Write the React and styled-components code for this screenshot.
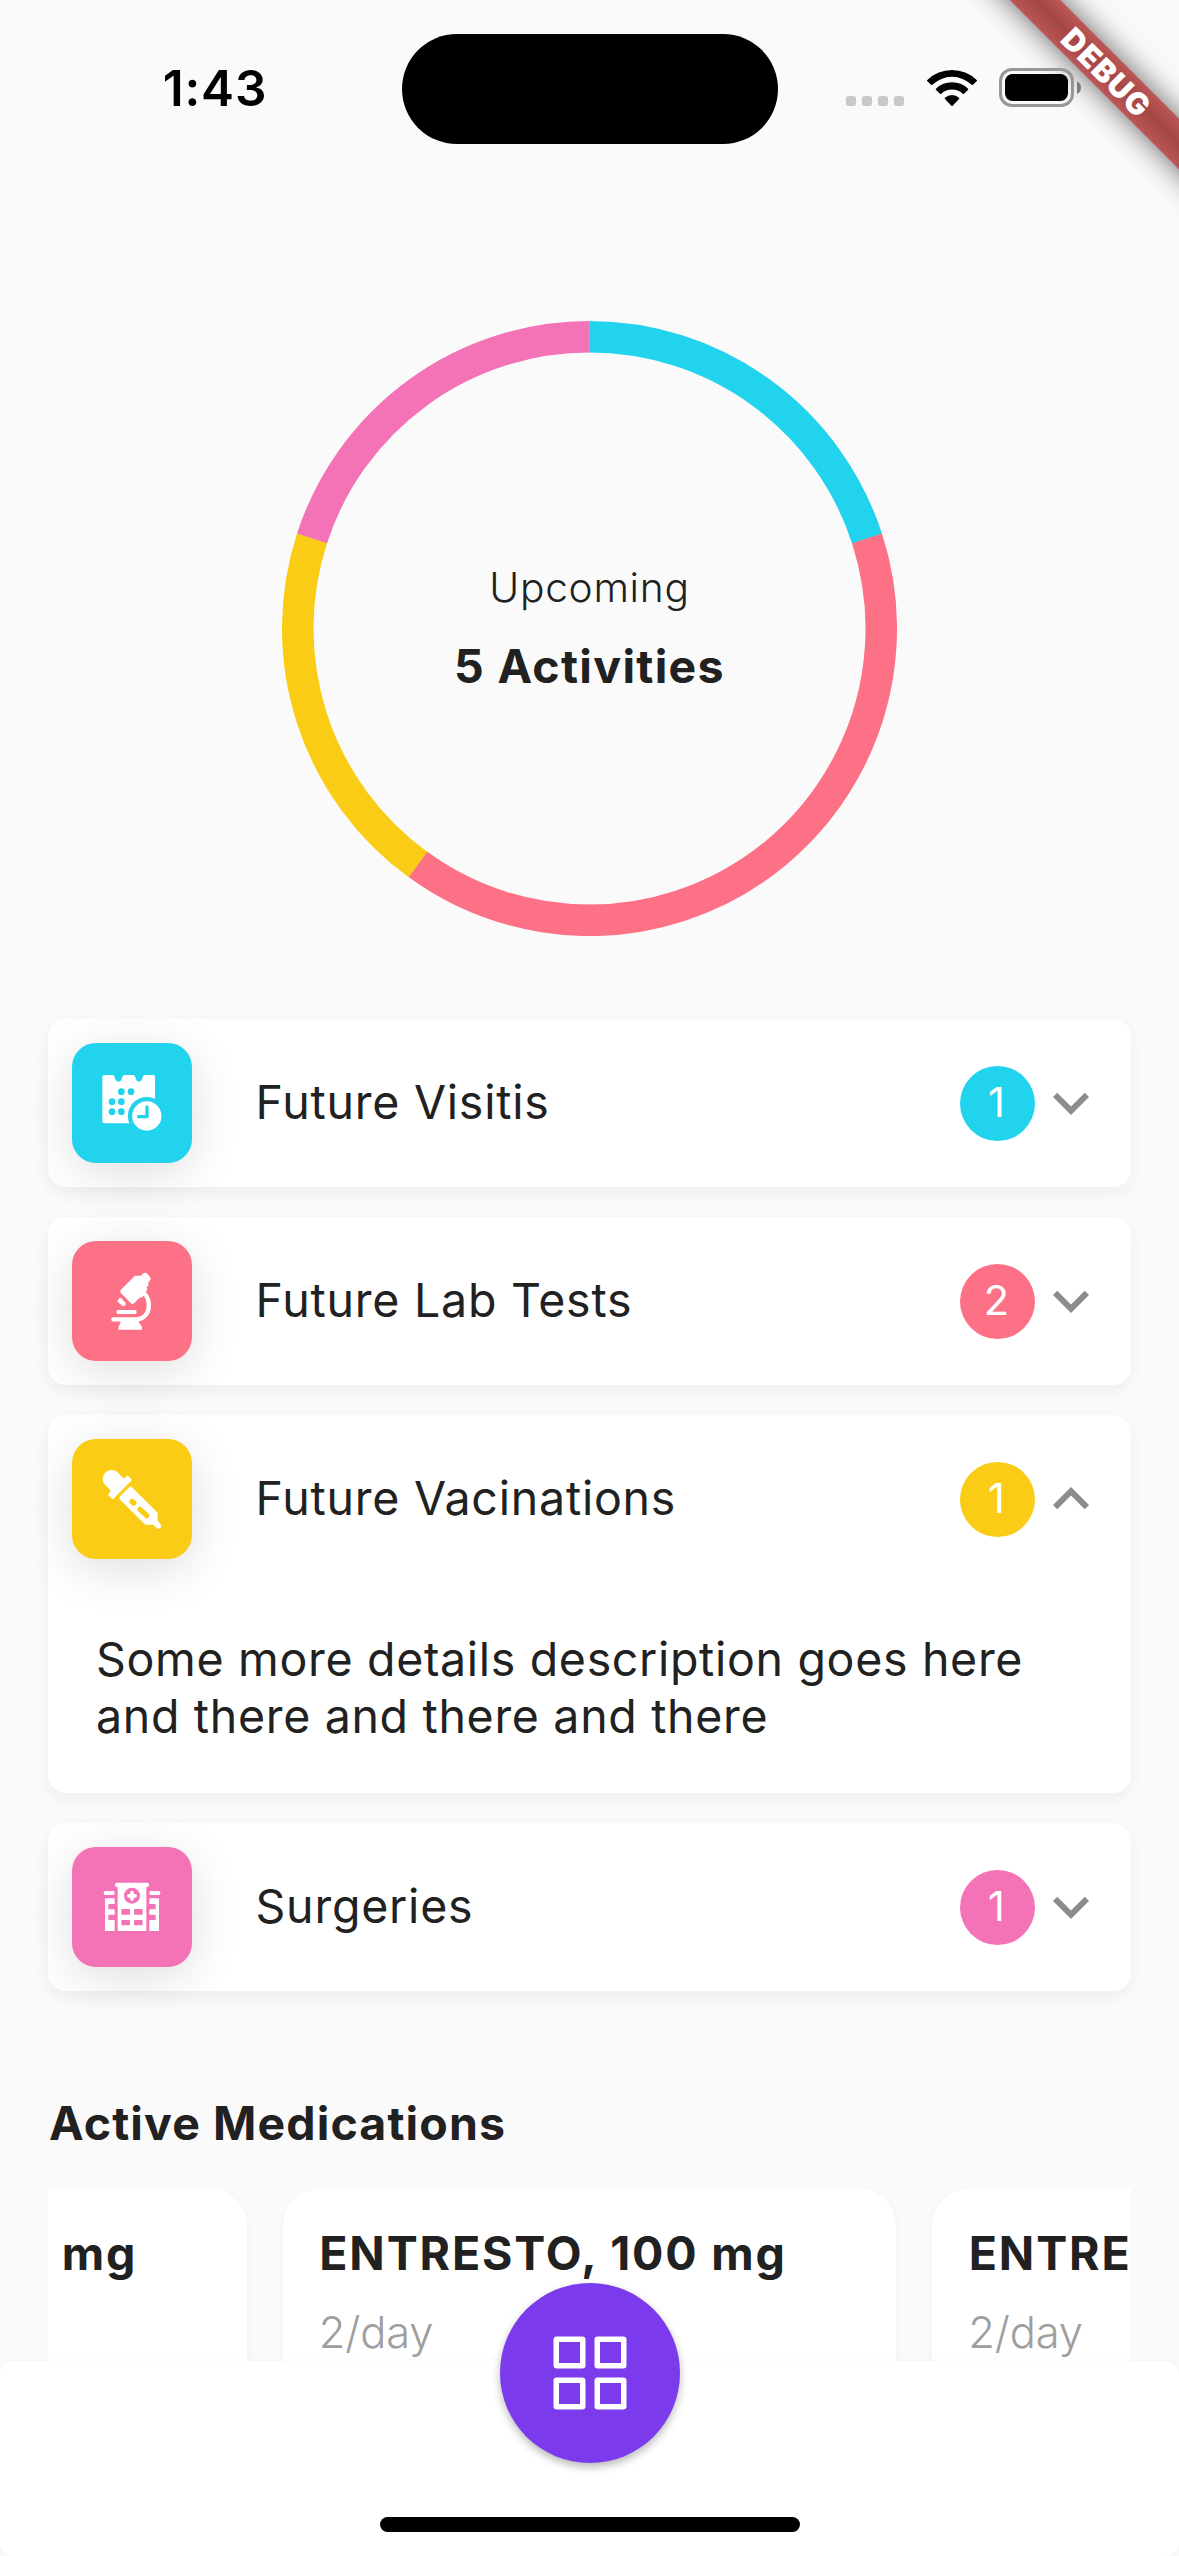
import React, { useState } from "react";
import styled, { createGlobalStyle } from "styled-components";

const GlobalStyle = createGlobalStyle`
  *, *::before, *::after { box-sizing: border-box; }
  html, body { margin: 0; padding: 0; background: #fafafa; }
`;

const colors = {
  cyan: "#22d3ee",
  rose: "#fd7186",
  yellow: "#facc15",
  pink: "#f472b6",
  violet: "#7c3aed",
  ink: "#212121",
};

const Screen = styled.div`
  position: relative;
  display: flex;
  flex-direction: column;
  width: 1179px;
  height: 2556px;
  overflow: hidden;
  background: #fafafa;
  color: ${colors.ink};
  font-family: Inter, "Liberation Sans", sans-serif;
`;

/* ---------- status bar ---------- */

const StatusBar = styled.header`
  position: relative;
  z-index: 2;
  flex: none;
  display: grid;
  grid-template-columns: 402px 376px 401px;
  align-items: center;
  height: 178px;
`;

const Time = styled.span`
  padding: 0 0 2px 28px;
  text-align: center;
  color: #000;
  font-size: 49.5px;
  font-weight: 600;
  letter-spacing: 0.8px;
  line-height: 60px;
`;

const Island = styled.div`
  height: 110px;
  border-radius: 56px;
  background: #000;
`;

const StatusIcons = styled.div`
  display: flex;
  align-items: center;
  padding: 0 0 3px 68px;
`;

const SignalDots = styled.div`
  display: flex;
  gap: 6px;
  margin: 26px 23px 0 0;
`;

const SignalDot = styled.i`
  width: 10px;
  height: 10px;
  border-radius: 3px;
  background: #c8c8c8;
`;

const WifiGlyph = styled.svg`
  width: 50px;
  height: 38px;
  margin-right: 22px;
`;

const BatteryGlyph = styled.svg`
  width: 82px;
  height: 39px;
`;

/* ---------- debug ribbon ---------- */

const Ribbon = styled.div`
  position: absolute;
  z-index: 1;
  left: 907px;
  top: 54px;
  width: 400px;
  height: 36px;
  transform: rotate(45deg);
  display: flex;
  align-items: center;
  justify-content: center;
  background: linear-gradient(#ba5757, #a64545 50%, #ba5757);
  box-shadow: 0 0 30px rgba(0, 0, 0, 0.6);
  color: #fff;
  font-size: 30.6px;
  font-weight: 900;
  letter-spacing: 1px;
`;

/* ---------- activity ring ---------- */

const RingSection = styled.section`
  flex: none;
  display: grid;
  place-items: center;
  margin: 143px 0 83px;
`;

const RingChart = styled.svg`
  grid-area: 1 / 1;
  width: 615px;
  height: 615px;
`;

const RingLabels = styled.div`
  grid-area: 1 / 1;
  display: flex;
  flex-direction: column;
  align-items: center;
  gap: 25px;
`;

const RingCaption = styled.span`
  font-size: 40.7px;
  font-weight: 300;
  letter-spacing: 0.7px;
  line-height: 50px;
`;

const RingTotal = styled.strong`
  font-size: 46.5px;
  font-weight: 700;
  letter-spacing: 1.3px;
  line-height: 57px;
`;

/* ---------- accordion ---------- */

const List = styled.section`
  flex: none;
  display: flex;
  flex-direction: column;
  gap: 30px;
  padding: 0 48px;
`;

const Card = styled.article`
  border-radius: 18px;
  background: #fff;
  box-shadow: 0 6px 16px rgba(0, 0, 0, 0.05);
`;

const CardHeader = styled.button`
  display: flex;
  align-items: center;
  width: 100%;
  height: 168px;
  padding: 0 24px;
  border: 0;
  background: none;
  color: inherit;
  font: inherit;
  text-align: left;
`;

const Tile = styled.span`
  flex: none;
  width: 120px;
  height: 120px;
  border-radius: 24px;
  background: ${(p) => p.$tone};
  box-shadow: 0 10px 48px rgba(0, 0, 0, 0.13);
`;

const TileGlyph = styled.svg`
  display: block;
  width: 120px;
  height: 120px;
`;

const CardTitle = styled.span`
  flex: 1;
  padding: 0 0 2px 63.5px;
  font-size: 46.5px;
  letter-spacing: 0.78px;
  line-height: 57px;
`;

const Count = styled.span`
  flex: none;
  display: grid;
  place-items: center;
  width: 75px;
  height: 75px;
  padding: 0 2px 3px 0;
  border-radius: 50%;
  background: ${(p) => p.$tone};
  color: #fff;
  font-size: 41.5px;
  font-weight: 400;
`;

const Chevron = styled.svg`
  flex: none;
  width: 72px;
  height: 72px;
  transform: ${(p) => (p.$open ? "rotate(180deg)" : "none")};
  fill: #8c8c8c;
`;

const CardBody = styled.p`
  margin: 0;
  padding: 48px;
  font-size: 46.5px;
  letter-spacing: 0.68px;
  line-height: 57px;
`;

/* ---------- medications ---------- */

const Medications = styled.section`
  flex: 1;
  min-height: 0;
  display: flex;
  flex-direction: column;
  gap: 37px;
  padding: 104px 48px 0;
`;

const SectionTitle = styled.h2`
  flex: none;
  margin: 0;
  padding-left: 1px;
  font-size: 46.5px;
  font-weight: 700;
  letter-spacing: 1.1px;
  line-height: 57px;
`;

const MedStrip = styled.div`
  flex: 1;
  display: flex;
  justify-content: center;
  gap: 36px;
  overflow: hidden;
`;

const MedCard = styled.article`
  flex: none;
  display: flex;
  flex-direction: column;
  gap: 23px;
  width: 613.5px;
  height: 240px;
  padding: 36px;
  border-radius: 36px;
  background: #fff;
  box-shadow: 0 3px 9px rgba(0, 0, 0, 0.04);
`;

const MedName = styled.strong`
  padding-left: 0.5px;
  font-size: 46.5px;
  font-weight: 700;
  letter-spacing: 1.85px;
  line-height: 57px;
  white-space: nowrap;
`;

const MedDose = styled.span`
  color: #9e9e9e;
  font-size: 43.5px;
  font-weight: 300;
  letter-spacing: -0.2px;
  line-height: 54px;
`;

/* ---------- bottom bar ---------- */

const BottomBar = styled.nav`
  position: relative;
  flex: none;
  display: flex;
  align-items: flex-end;
  justify-content: center;
  height: 195px;
  padding-bottom: 24px;
  border-radius: 14px;
  background: #fff;
  box-shadow: 0 0 9px rgba(0, 0, 0, 0.03);
`;

const HomeIndicator = styled.div`
  width: 420px;
  height: 15px;
  border-radius: 8px;
  background: #000;
`;

const Fab = styled.button`
  position: absolute;
  left: 50%;
  top: -78px;
  display: grid;
  place-items: center;
  width: 180px;
  height: 180px;
  margin-left: -90px;
  padding: 0;
  border: 0;
  border-radius: 50%;
  background: ${colors.violet};
  box-shadow: 0 4px 9px rgba(0, 0, 0, 0.28);
`;

const FabGlyph = styled.svg`
  width: 74px;
  height: 74px;
`;

/* ---------- glyphs, drawn on a 360-unit tile ---------- */

const CalendarIcon = ({ tone }) => (
  <TileGlyph viewBox="0 0 360 360" fill="#fff">
    <path d="M97 96H121Q126 96 128 102L130 109Q132 116 139 116Q147 116 149 109L151 102Q153 96 158 96H183Q188 96 190 102L192 109Q194 116 201 116Q208 116 210 109L212 102Q214 96 219 96H243Q249 96 249 102V235Q249 241 243 241H97Q91 241 91 235V102Q91 96 97 96Z" />
    <g fill={tone}>
      {[[148, 146], [177, 146], [120, 176], [148, 176], [120, 206], [148, 206]].map(([x, y]) => (
        <circle key={`${x}-${y}`} cx={x} cy={y} r="10" />
      ))}
      <circle cx="224.500" cy="219" r="57" />
    </g>
    <circle cx="224.500" cy="219" r="44" />
    <path d="M225 192V221H200" fill="none" stroke={tone} strokeWidth="10" strokeLinecap="round" strokeLinejoin="round" />
  </TileGlyph>
);

const MicroscopeIcon = () => (
  <TileGlyph viewBox="0 0 360 360" fill="#fff">
    <g transform="translate(60 42)">
      <path d="M86 105L126 65Q128 62 132 62H147L152 56Q159 51 166 56L174 65Q179 71 173 77L169 81V92L164 97Q168 104 163 109L150 128Q145 126 141 130L126 145Q121 149 116 144L86 113Q83 109 86 105Z" />
      <path d="M152 112C167 121 170.500 135 170.500 152C170.500 176 154 193 132 193H64" fill="none" stroke="#fff" strokeWidth="13" strokeLinecap="round" />
      <path d="M79 171H128" stroke="#fff" strokeWidth="12" strokeLinecap="round" />
      <path d="M76 138L82 129Q85 127 88 130L101 144Q103 147 100 151L95 153Q92 154 89 151L77 140Z" />
      <path d="M86 197H139Q142 206 148 212Q150 214 150 224H79Q79 214 82 211Q86 206 86 197Z" />
    </g>
  </TileGlyph>
);

const DropperIcon = ({ tone }) => (
  <TileGlyph viewBox="0 0 360 360" fill="#fff">
    <g transform="translate(60 -552)">
      <path d="M37 687C30 677 31 663 39 654C49 643 65 642 76 651L93 669L99 669L104 663Q106 661 108 663L118 673Q120 675 118 677L64 731Q62 733 60 731L49 721Q47 719 49 717L55 711V705Z" />
      <path d="M83 729Q81 727 83 725L113 695Q116 693 119 696L194 770Q197 773 197 777V796L206 809Q209 815 205 819Q200 823 194 819L184 809H164Q160 809 157 806L83 733Z" />
      <g stroke={tone} strokeLinecap="round">
        <path d="M121 740L125 744" strokeWidth="17" />
        <path d="M144 763L164 782" strokeWidth="16" />
      </g>
    </g>
  </TileGlyph>
);

const HospitalIcon = ({ tone }) => (
  <TileGlyph viewBox="0 0 360 360" fill="#fff">
    <g transform="translate(60 60)">
      <rect x="69" y="47" width="102" height="13" rx="5" />
      <rect x="77" y="50" width="86" height="142" />
      <rect x="35" y="72" width="33" height="12" rx="5" />
      <rect x="172" y="72" width="33" height="12" rx="5" />
      <path d="M40 94H68V111H53Q49 111 49 115V127H64Q68 127 68 131V143H53Q49 143 49 147V159H68V192H39V96Z" />
      <path d="M200 94H172V111H187Q191 111 191 115V127H176Q172 127 172 131V143H187Q191 143 191 147V159H172V192H201V96Z" />
      <g fill={tone}>
        <circle cx="120" cy="86" r="24" />
        <rect x="88" y="126" width="26" height="17" rx="3" />
        <rect x="126" y="126" width="26" height="17" rx="3" />
        <rect x="88" y="159" width="26" height="16" rx="3" />
        <rect x="126" y="159" width="26" height="16" rx="3" />
      </g>
      <path d="M120 77V96M110.500 86.500H129.500" stroke="#fff" strokeWidth="11" strokeLinecap="round" />
    </g>
  </TileGlyph>
);

const sections = [
  { id: "visits", title: "Future Visitis", count: 1, tone: colors.cyan, Icon: CalendarIcon },
  { id: "labs", title: "Future Lab Tests", count: 2, tone: colors.rose, Icon: MicroscopeIcon },
  {
    id: "vaccines",
    title: "Future Vacinations",
    count: 1,
    tone: colors.yellow,
    Icon: DropperIcon,
    details: "Some more details description goes here and there and there and there",
  },
  { id: "surgeries", title: "Surgeries", count: 1, tone: colors.pink, Icon: HospitalIcon },
];

const medications = [0, 1, 2].map((id) => ({ id, name: "ENTRESTO, 100 mg", dose: "2/day" }));

function ActivityRing() {
  const total = sections.reduce((sum, s) => sum + s.count, 0);
  const radius = 291.75;
  const length = 2 * Math.PI * radius;
  let start = 0;
  return (
    <RingSection>
      <RingChart viewBox="0 0 615 615">
        {sections.map((s) => {
          const share = s.count / total;
          const angle = start * 360 - 90;
          start += share;
          return (
            <circle
              key={s.id}
              cx="307.500"
              cy="307.500"
              r={radius}
              fill="none"
              stroke={s.tone}
              strokeWidth="31.500"
              strokeDasharray={`${share * length} ${length}`}
              transform={`rotate(${angle} 307.5 307.5)`}
            />
          );
        })}
      </RingChart>
      <RingLabels>
        <RingCaption>Upcoming</RingCaption>
        <RingTotal>{total} Activities</RingTotal>
      </RingLabels>
    </RingSection>
  );
}

export default function App() {
  const [openId, setOpenId] = useState("vaccines");

  return (
    <>
      <GlobalStyle />
      <Screen>
        <Ribbon>DEBUG</Ribbon>
        <StatusBar>
          <Time>1:43</Time>
          <Island />
          <StatusIcons>
            <SignalDots>
              <SignalDot />
              <SignalDot />
              <SignalDot />
              <SignalDot />
            </SignalDots>
            <WifiGlyph viewBox="0 0 150 114">
              <path d="M1 33A106 106 0 0 1 149 33Q151 35 149 37L138 47Q136 49 134 47A86 86 0 0 0 16 47Q14 49 12 47L1 37Q-1 35 1 33Z" />
              <path d="M27 59A69 69 0 0 1 123 59Q125 61 123 63L111 74Q109 76 107 74A47 47 0 0 0 43 74Q41 76 39 74L27 63Q25 61 27 59Z" />
              <path d="M54 86A31 31 0 0 1 96 86Q98 88 96 90L77 110Q75 112 73 110L54 90Q52 88 54 86Z" />
            </WifiGlyph>
            <BatteryGlyph viewBox="0 0 82 39">
              <rect x="1.500" y="1.500" width="72" height="36" rx="11.500" fill="none" stroke="#979797" strokeWidth="3" />
              <rect x="6" y="6" width="63" height="27" rx="7.500" />
              <path d="M78 13.500Q82 15 82 19.500T78 26Z" fill="#7c7c7c" />
            </BatteryGlyph>
          </StatusIcons>
        </StatusBar>

        <ActivityRing />

        <List>
          {sections.map(({ id, title, count, tone, Icon, details }) => {
            const open = openId === id;
            return (
              <Card key={id}>
                <CardHeader onClick={() => setOpenId(open ? null : id)}>
                  <Tile $tone={tone}>
                    <Icon tone={tone} />
                  </Tile>
                  <CardTitle>{title}</CardTitle>
                  <Count $tone={tone}>{count}</Count>
                  <Chevron viewBox="0 0 24 24" $open={open}>
                    <path d="M16.590 8.590L12 13.170 7.410 8.590 6 10l6 6 6-6z" />
                  </Chevron>
                </CardHeader>
                {open && details && <CardBody>{details}</CardBody>}
              </Card>
            );
          })}
        </List>

        <Medications>
          <SectionTitle>Active Medications</SectionTitle>
          <MedStrip>
            {medications.map((m) => (
              <MedCard key={m.id}>
                <MedName>{m.name}</MedName>
                <MedDose>{m.dose}</MedDose>
              </MedCard>
            ))}
          </MedStrip>
        </Medications>

        <BottomBar>
          <HomeIndicator />
          <Fab aria-label="Menu">
            <FabGlyph viewBox="0 0 74 74" fill="none" stroke="#fff" strokeWidth="5.500">
              <rect x="3.250" y="3.250" width="26.500" height="26.500" rx="0.500" />
              <rect x="44.250" y="3.250" width="26.500" height="26.500" rx="0.500" />
              <rect x="3.250" y="44.250" width="26.500" height="26.500" rx="0.500" />
              <rect x="44.250" y="44.250" width="26.500" height="26.500" rx="0.500" />
            </FabGlyph>
          </Fab>
        </BottomBar>
      </Screen>
    </>
  );
}
